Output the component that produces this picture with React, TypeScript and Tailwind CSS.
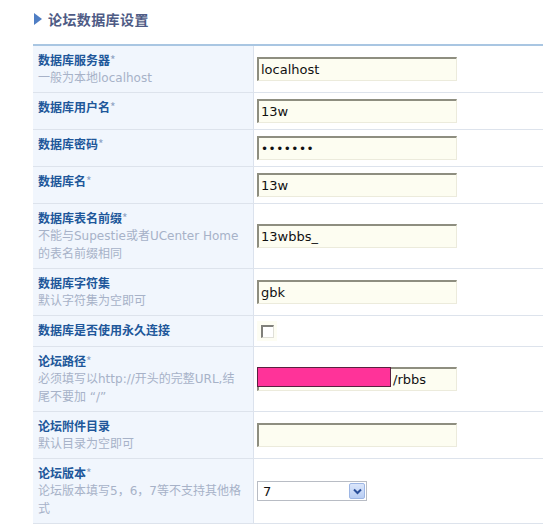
import React from 'react';

type Row = {
  label: string;
  star?: boolean;
  hint?: string[];
  field: 'text' | 'password' | 'checkbox' | 'path' | 'empty' | 'select';
  value?: string;
};

const rows: Row[] = [
  { label: '数据库服务器', star: true, hint: ['一般为本地localhost'], field: 'text', value: 'localhost' },
  { label: '数据库用户名', star: true, field: 'text', value: '13w' },
  { label: '数据库密码', star: true, field: 'password', value: '•••••••' },
  { label: '数据库名', star: true, field: 'text', value: '13w' },
  {
    label: '数据库表名前缀',
    star: true,
    hint: ['不能与Supestie或者UCenter Home', '的表名前缀相同'],
    field: 'text',
    value: '13wbbs_',
  },
  { label: '数据库字符集', hint: ['默认字符集为空即可'], field: 'text', value: 'gbk' },
  { label: '数据库是否使用永久连接', field: 'checkbox' },
  {
    label: '论坛路径',
    star: true,
    hint: ['必须填写以http://开头的完整URL,结', '尾不要加 “/”'],
    field: 'path',
    value: '/rbbs',
  },
  { label: '论坛附件目录', hint: ['默认目录为空即可'], field: 'empty' },
  { label: '论坛版本', star: true, hint: ['论坛版本填写5，6，7等不支持其他格', '式'], field: 'select', value: '7' },
];

const inputBox =
  'w-[200px] h-[24px] my-[1px] bg-[#fdfdf1] border-t-2 border-l-2 border-r border-b border-t-[#8e8e80] border-l-[#8e8e80] border-r-[#ecebdc] border-b-[#ecebdc] flex items-center px-[2px] text-[13px] text-[#111] leading-none';

function Field({ row }: { row: Row }) {
  if (row.field === 'checkbox') {
    return (
      <div className="w-[20px] h-[20px] bg-[#fdfdf3] flex items-center justify-center">
        <div className="w-[13px] h-[13px] bg-white border-t-2 border-l-2 border-r border-b border-t-[#80807a] border-l-[#80807a] border-r-[#e0e0d8] border-b-[#e0e0d8]" />
      </div>
    );
  }
  if (row.field === 'select') {
    return (
      <div className="w-[110px] h-[20px] border border-[#b8bcc4] bg-white flex items-center">
        <span className="flex-1 pl-[5px] text-[13px] text-[#111] leading-none">{row.value}</span>
        <div className="w-[16px] h-[16px] mr-[1px] bg-gradient-to-b from-[#dbe6fb] to-[#b8cdf3] border border-[#9db6e4] rounded-[2px] flex items-center justify-center">
          <svg width="9" height="7" viewBox="0 0 9 7">
            <path d="M1 1.5 L4.5 5 L8 1.5" stroke="#2a4f9a" strokeWidth="2" fill="none" />
          </svg>
        </div>
      </div>
    );
  }
  if (row.field === 'path') {
    return (
      <div className={`${inputBox} relative`}>
        <div className="absolute left-[-2px] top-[-2px] w-[134px] h-[20px] bg-[#ff3399] border border-[#5a2040]" />
        <span className="pl-[132px]">{row.value}</span>
      </div>
    );
  }
  return (
    <div className={inputBox}>
      <span className={row.field === 'password' ? 'text-[12px] tracking-[0.5px]' : ''}>{row.value ?? ''}</span>
    </div>
  );
}

export default function App() {
  return (
    <div className="w-[543px] h-[530px] bg-white overflow-hidden font-['DejaVu_Sans','Noto_Sans_CJK_SC',sans-serif]">
      <div className="pl-[34px] pt-[10px] flex items-center h-[24px] mt-[2px]">
        <svg width="8" height="12" viewBox="0 0 8 12" className="mr-[6px]">
          <path d="M0 0 L8 6 L0 12 Z" fill="#4f7ec4" />
        </svg>
        <span className="text-[14px] font-bold text-[#4e5b85] tracking-[0.4px] font-['Noto_Sans_CJK_SC',sans-serif]">
          论坛数据库设置
        </span>
      </div>

      <div className="ml-[33px] mt-[18px] w-[510px] border-t-2 border-[#a9c6e2]">
        {rows.map((row) => (
          <div key={row.label} className="flex border-b border-[#dde3ec]">
            <div className="w-[221px] bg-[#f1f6fd] border-r border-[#dbe2ed] px-[5px] py-[5px] text-[12px] leading-[18px]">
              <div className="text-[#20579a] font-bold font-['Noto_Sans_CJK_SC',sans-serif]">
                {row.label}
                {row.star && <span className="text-[#8fa4c4] font-normal">*</span>}
              </div>
              {row.hint?.map((h) => (
                <div key={h} className="text-[#a7b2c8]">
                  {h}
                </div>
              ))}
            </div>
            <div className="flex-1 flex items-center pl-[3px] py-[5px]">
              <Field row={row} />
            </div>
          </div>
        ))}
      </div>
    </div>
  );
}
